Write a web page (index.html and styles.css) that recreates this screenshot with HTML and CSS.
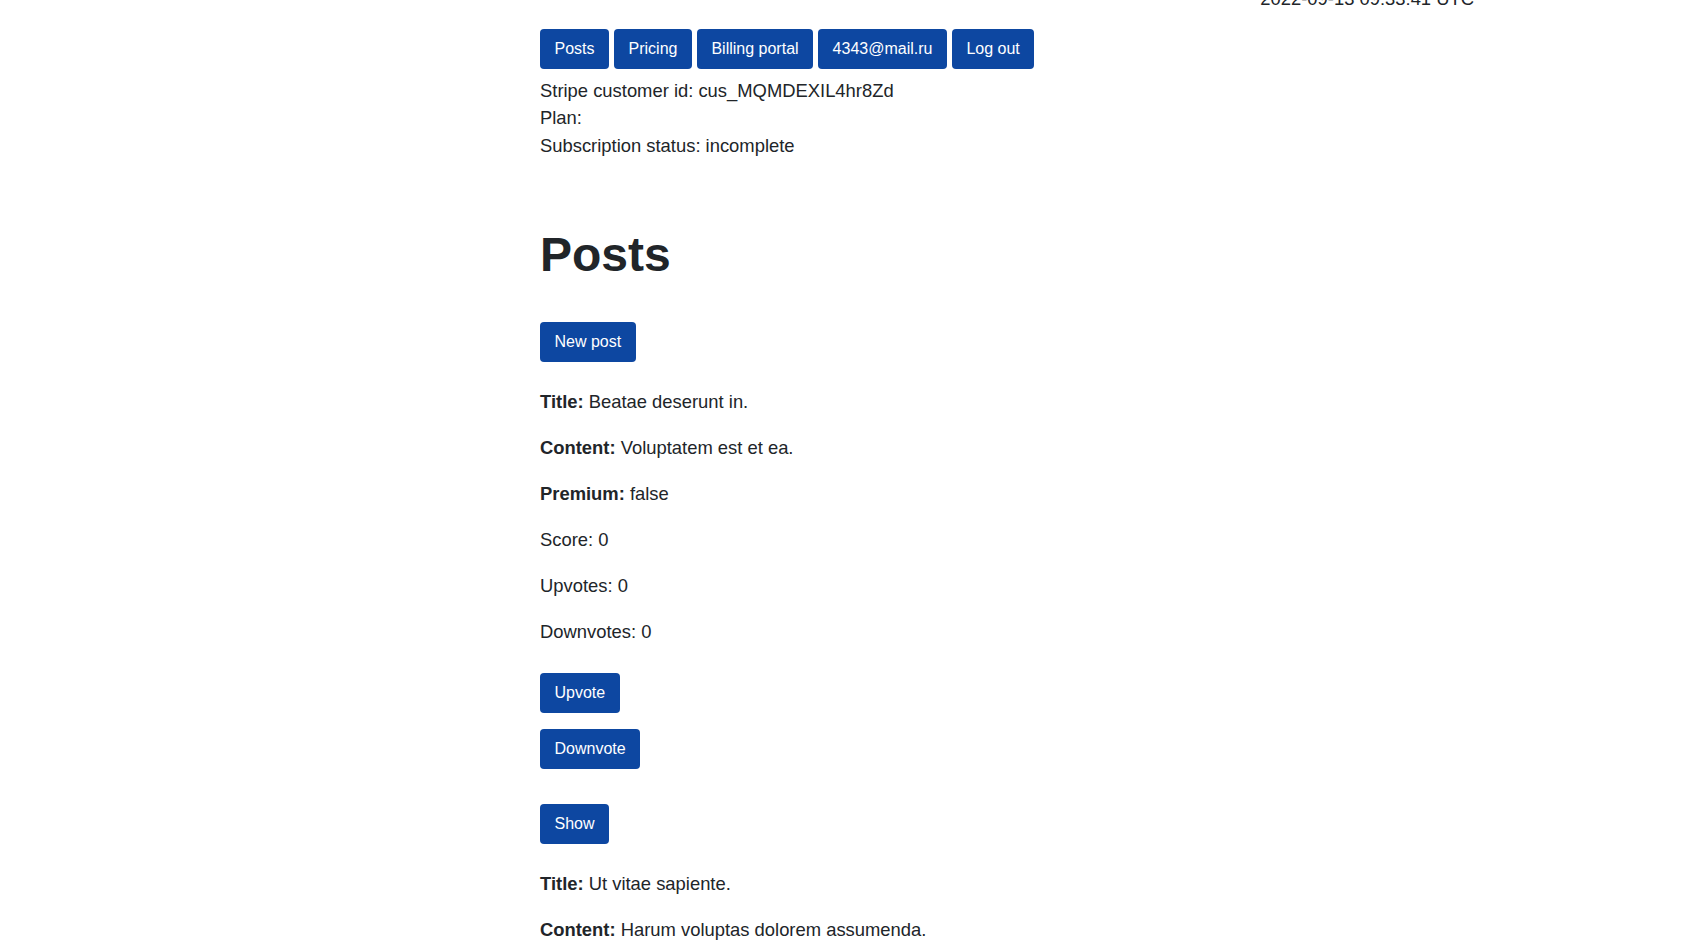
FILE: index.html
```html
<!DOCTYPE html>
<html lang="en">
<head>
<meta charset="utf-8">
<title>Posts</title>
<link rel="stylesheet" href="styles.css">
</head>
<body>
<div class="page">
  <header class="topbar">
    <span class="timestamp">2022-09-13 09:33:41 UTC</span>
  </header>
  <nav class="nav">
    <a class="btn" href="#">Posts</a>
    <a class="btn" href="#">Pricing</a>
    <a class="btn" href="#">Billing portal</a>
    <a class="btn" href="#">4343@mail.ru</a>
    <a class="btn" href="#">Log out</a>
  </nav>
  <div class="account">
    <div>Stripe customer id: cus_MQMDEXIL4hr8Zd</div>
    <div>Plan: </div>
    <div>Subscription status: incomplete</div>
  </div>

  <h1 class="title">Posts</h1>
  <div class="new-post"><a class="btn" href="#">New post</a></div>

  <div class="posts">
    <div class="post">
      <p><strong>Title:</strong> Beatae deserunt in.</p>
      <p><strong>Content:</strong> Voluptatem est et ea.</p>
      <p><strong>Premium:</strong> false</p>
      <p>Score: 0</p>
      <p>Upvotes: 0</p>
      <p>Downvotes: 0</p>
      <div class="votes">
        <form class="vote-form"><button class="btn" type="button">Upvote</button></form>
        <form class="vote-form"><button class="btn" type="button">Downvote</button></form>
      </div>
      <div class="show"><a class="btn" href="#">Show</a></div>
    </div>
    <div class="post">
      <p><strong>Title:</strong> Ut vitae sapiente.</p>
      <p><strong>Content:</strong> Harum voluptas dolorem assumenda.</p>
      <p><strong>Premium:</strong> false</p>
      <p>Score: 0</p>
    </div>
  </div>
</div>
</body>
</html>
```
FILE: styles.css
```css
html, body {
  margin: 0;
  padding: 0;
  background: #ffffff;
}

body {
  font-family: "Liberation Sans", Arial, Helvetica, sans-serif;
  font-size: 18.4px;
  line-height: 1.5;
  color: #212529;
  overflow: hidden;
}

.page {
  margin-left: 540px;
  width: 934px;
}

.topbar {
  display: flex;
  justify-content: flex-end;
  margin-top: -15px;
}

.timestamp {
  white-space: nowrap;
}

.nav {
  display: flex;
  gap: 5px;
  margin-top: 16px;
  margin-bottom: 1px;
}

.btn {
  display: inline-block;
  background: #0d47a1;
  color: #ffffff;
  font-family: "Liberation Sans", Arial, Helvetica, sans-serif;
  font-size: 16px;
  line-height: 24px;
  padding: 8px 14.5px;
  border: 0;
  border-radius: 4px;
  text-decoration: none;
  cursor: pointer;
}

.account {
  margin-top: 8px;
}

.title {
  font-size: 48px;
  font-weight: 700;
  line-height: 1.2;
  margin: 67px 0 0;
}

.new-post {
  margin-top: 37.5px;
}

.posts {
  margin-top: 26.6px;
}

.post p {
  margin: 0 0 18.4px;
}

.votes {
  margin-top: 27px;
  display: flex;
  flex-direction: column;
  align-items: flex-start;
  gap: 16px;
}

.vote-form {
  margin: 0;
}

.show {
  margin-top: 35.5px;
  margin-bottom: 26px;
}
```
